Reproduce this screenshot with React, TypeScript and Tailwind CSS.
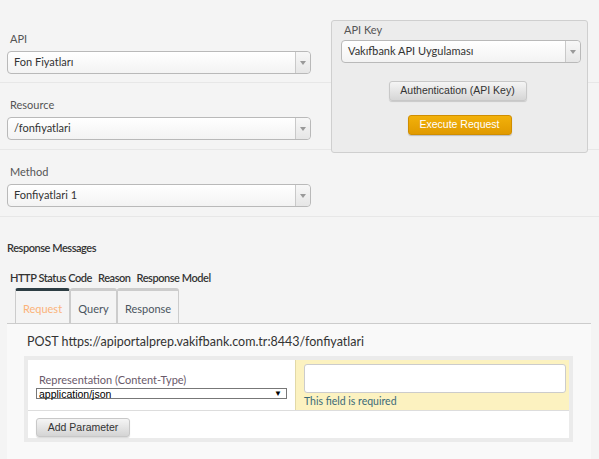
const font = { fontFamily: 'Lato, "Noto Sans", sans-serif' }
const arial = { fontFamily: '"Liberation Sans", Arial, sans-serif' }

function Select({ value, className = '' }: { value: string; className?: string }) {
  return (
    <div
      className={`flex h-[23px] items-stretch rounded-[4px] border border-[#b9b9b9] bg-gradient-to-b from-white to-[#f3f3f3] shadow-[inset_0_1px_0_#fff] ${className}`}
    >
      <div className="flex flex-1 items-center pl-[6px] text-[11px] text-[#333]">{value}</div>
      <div className="flex w-[15px] items-center justify-center rounded-r-[4px] border-l border-[#c9c9c9] bg-gradient-to-b from-[#f7f7f7] to-[#e6e6e6]">
        <span className="block h-0 w-0 border-x-[3px] border-t-[4px] border-x-transparent border-t-[#999]" />
      </div>
    </div>
  )
}

function Field({ label, value, top = 15, height = 67 }: { label: string; value: string; top?: number; height?: number }) {
  return (
    <div className="border-b border-[#e7e7e7] pl-[7px]" style={{ height, paddingTop: top }}>
      <div className="mb-[5px] pl-[3px] text-[11px] leading-[14px] text-[#555]">{label}</div>
      <Select value={value} className="w-[304px]" />
    </div>
  )
}

export default function App() {
  return (
    <div className="h-[459px] w-[599px] overflow-hidden bg-[#f4f4f4]" style={font}>
      {/* top form */}
      <div className="relative">
        <Field label="API" value="Fon Fiyatları" top={32} height={83} />
        <Field label="Resource" value="/fonfiyatlari" />
        <Field label="Method" value="Fonfiyatlari 1" />

        {/* API key panel */}
        <div className="absolute left-[331px] top-[20px] h-[133px] w-[257px] rounded-[3px] border border-[#cfcfcf] bg-[#ececec] px-[9px] pt-[2px]">
          <div className="pl-[3px] text-[11px] leading-[14px] text-[#555]">API Key</div>
          <Select value="Vakıfbank API Uygulaması" className="mt-[3px] h-[22px] w-[240px]" />
          <div className="mt-[18px] flex flex-col items-center gap-[14px]" style={arial}>
            <button className="-ml-[4px] h-[20px] w-[138px] rounded-[3px] border border-[#c8c8c8] bg-gradient-to-b from-[#f5f5f5] to-[#d6d6d6] text-[10.5px] text-[#333] shadow-[0_1px_1px_rgba(0,0,0,0.15)]">
              Authentication (API Key)
            </button>
            <button className="h-[20px] w-[104px] rounded-[3px] border border-[#d08e00] bg-gradient-to-b from-[#f2b10a] to-[#e19a00] text-[10.5px] text-white shadow-[0_1px_1px_rgba(0,0,0,0.2)]">
              Execute Request
            </button>
          </div>
        </div>
      </div>

      {/* response messages */}
      <div className="pl-[7px] pt-[24px] text-[11px] font-semibold leading-[14px] tracking-[-0.45px] text-[#333]">
        Response Messages
      </div>
      <div className="flex gap-[6px] pl-[10px] pt-[16px] text-[11px] font-semibold leading-[14px] tracking-[-0.45px] text-[#333]">
        <span>HTTP Status Code</span>
        <span>Reason</span>
        <span>Response Model</span>
      </div>

      {/* tabs */}
      <div className="mt-[3px] flex pl-[15px] text-[11px] leading-[14px]">
        <div className="flex h-[35px] w-[55px] items-center justify-center rounded-t-[3px] border-x border-t-[3px] border-[#ccc] border-t-[#2d3d43] pt-[3px] text-[#fbb37a]">Request</div>
        <div className="flex h-[35px] w-[47px] items-center justify-center rounded-t-[3px] border-x border-t-[3px] border-[#ccc] pt-[3px] text-[#4a5560]">Query</div>
        <div className="flex h-[35px] w-[62px] items-center justify-center rounded-t-[3px] border-x border-t-[3px] border-[#ccc] pt-[3px] text-[#4a5560]">Response</div>
      </div>

      <div className="ml-[7px] w-[584px] border-t border-[#ccc] bg-[#f9f9f9] pb-[20px]">
        <div className="pl-[20px] pt-[10px] text-[12.5px] leading-[16px] text-[#333]">
          POST https://apiportalprep.vakifbank.com.tr:8443/fonfiyatlari
        </div>
        <div className="ml-[17px] mt-[6px] w-[549px] bg-[#ebebeb] p-[4px]">
          <div className="flex h-[51px] border-b border-[#ddd] bg-white">
            <div className="w-[267px] pl-[8px] pt-[13px]">
              <div className="pl-[3px] text-[11px] leading-[14px] text-[#6a5a6a]">Representation (Content-Type)</div>
              <div
                className="mt-[1px] flex h-[11px] w-[251px] items-center justify-between border border-[#777] bg-white pl-[2px] pr-[4px] text-[10.5px] leading-[10px] text-black"
                style={arial}
              >
                <span>application/json</span>
                <span className="text-[8px]">▼</span>
              </div>
            </div>
            <div className="flex-1 border-l border-[#e2d9a8] bg-[#fcf2c0] pl-[8px] pr-[3px] pt-[4px]">
              <div className="h-[29px] rounded-[3px] border border-[#ccc] bg-white" />
              <div className="mt-[2px] text-[10.5px] leading-[13px] text-[#3b6a78]">This field is required</div>
            </div>
          </div>
          <div className="h-[27px] bg-white pl-[8px] pt-[2px]">
            <button
              className="h-[19px] w-[94px] rounded-[3px] border border-[#c8c8c8] bg-gradient-to-b from-[#f5f5f5] to-[#d4d4d4] text-[10.5px] text-[#333] shadow-[0_1px_1px_rgba(0,0,0,0.15)]"
              style={arial}
            >
              Add Parameter
            </button>
          </div>
        </div>
      </div>
    </div>
  )
}
